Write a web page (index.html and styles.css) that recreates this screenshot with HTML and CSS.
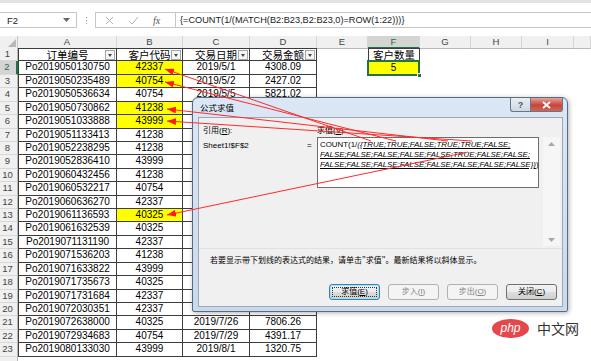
FILE: index.html
```html
<!DOCTYPE html>
<html lang="zh-CN">
<head>
<meta charset="utf-8">
<title>公式求值</title>
<link rel="stylesheet" href="styles.css">
</head>
<body>
<div class="app">
  <div class="topbar">
    <div class="namebox"><span class="nb-text">F2</span><svg class="nb-dd" width="7" height="4" viewBox="0 0 7 4"><path d="M0 0H7L3.5 4Z" fill="#666"/></svg></div>
    <div class="dots"><i></i><i></i><i></i></div>
    <div class="fxbox">
      <svg class="ico" width="9" height="9" viewBox="0 0 9 9"><path d="M1 1L8 8M8 1L1 8" stroke="#b4b4b4" stroke-width="1" fill="none"/></svg>
      <svg class="ico" width="11" height="9" viewBox="0 0 11 9"><path d="M1 5L4 8L10 1" stroke="#b4b4b4" stroke-width="1" fill="none"/></svg>
      <span class="fx">fx</span>
    </div>
    <div class="formula">{=COUNT(1/(MATCH(B2:B23,B2:B23,0)=ROW(1:22)))}</div>
  </div>

  <div class="sheet">
    <div class="row hdr">
      <div class="corner"><svg width="8" height="8" viewBox="0 0 8 8"><path d="M8 0V8H0Z" fill="#b8b8b8"/></svg></div>
      <div class="ch">A</div><div class="ch">B</div><div class="ch">C</div><div class="ch">D</div><div class="ch">E</div><div class="ch selc">F</div><div class="ch">G</div><div class="ch">H</div><div class="ch">I</div><div class="ch"></div>
    </div>
    <div class="row r1">
      <div class="rh">1</div>
      <div class="c a th">订单编号<span class="flt"></span></div>
      <div class="c th">客户代码<span class="flt"></span></div>
      <div class="c th">交易日期<span class="flt"></span></div>
      <div class="c th">交易金额<span class="flt"></span></div>
      <div class="fcell th">客户数量</div>
    </div>
    <div class="row">
      <div class="rh selr">2</div>
      <div class="c a">Po2019050130750</div><div class="c y">42337</div><div class="c">2019/5/1</div><div class="c">4308.09</div>
      <div class="fsel">5<span class="handle"></span></div>
    </div>
    <div class="row"><div class="rh">3</div><div class="c a">Po2019050235489</div><div class="c y">40754</div><div class="c">2019/5/2</div><div class="c">2427.02</div></div>
    <div class="row"><div class="rh">4</div><div class="c a">Po2019050536634</div><div class="c">40754</div><div class="c">2019/5/5</div><div class="c">5821.02</div></div>
    <div class="row"><div class="rh">5</div><div class="c a">Po2019050730862</div><div class="c y">41238</div><div class="c"></div><div class="c"></div></div>
    <div class="row"><div class="rh">6</div><div class="c a">Po2019051033888</div><div class="c y">43999</div><div class="c"></div><div class="c"></div></div>
    <div class="row"><div class="rh">7</div><div class="c a">Po2019051133413</div><div class="c">41238</div><div class="c"></div><div class="c"></div></div>
    <div class="row"><div class="rh">8</div><div class="c a">Po2019052238295</div><div class="c">41238</div><div class="c"></div><div class="c"></div></div>
    <div class="row"><div class="rh">9</div><div class="c a">Po2019052836410</div><div class="c">43999</div><div class="c"></div><div class="c"></div></div>
    <div class="row"><div class="rh">10</div><div class="c a">Po2019060432456</div><div class="c">41238</div><div class="c"></div><div class="c"></div></div>
    <div class="row"><div class="rh">11</div><div class="c a">Po2019060532217</div><div class="c">40754</div><div class="c"></div><div class="c"></div></div>
    <div class="row"><div class="rh">12</div><div class="c a">Po2019060636270</div><div class="c">42337</div><div class="c"></div><div class="c"></div></div>
    <div class="row"><div class="rh">13</div><div class="c a">Po2019061136593</div><div class="c y">40325</div><div class="c"></div><div class="c"></div></div>
    <div class="row"><div class="rh">14</div><div class="c a">Po2019061632539</div><div class="c">40325</div><div class="c"></div><div class="c"></div></div>
    <div class="row"><div class="rh">15</div><div class="c a">Po2019071131190</div><div class="c">42337</div><div class="c"></div><div class="c"></div></div>
    <div class="row"><div class="rh">16</div><div class="c a">Po2019071536203</div><div class="c">41238</div><div class="c"></div><div class="c"></div></div>
    <div class="row"><div class="rh">17</div><div class="c a">Po2019071633822</div><div class="c">43999</div><div class="c"></div><div class="c"></div></div>
    <div class="row"><div class="rh">18</div><div class="c a">Po2019071735673</div><div class="c">40325</div><div class="c"></div><div class="c"></div></div>
    <div class="row"><div class="rh">19</div><div class="c a">Po2019071731684</div><div class="c">42337</div><div class="c"></div><div class="c"></div></div>
    <div class="row"><div class="rh">20</div><div class="c a">Po2019072030351</div><div class="c">42337</div><div class="c">2019/7/20</div><div class="c">4328.82</div></div>
    <div class="row"><div class="rh">21</div><div class="c a">Po2019072638000</div><div class="c">40325</div><div class="c">2019/7/26</div><div class="c">7806.26</div></div>
    <div class="row"><div class="rh">22</div><div class="c a">Po2019072934683</div><div class="c">40754</div><div class="c">2019/7/29</div><div class="c">4391.17</div></div>
    <div class="row"><div class="rh">23</div><div class="c a">Po2019080133030</div><div class="c">43999</div><div class="c">2019/8/1</div><div class="c">1320.75</div></div>
    <div class="row"><div class="rh"></div></div>
  </div>

  <div class="dlg">
    <div class="tb">
      <span class="ttl">公式求值</span>
      <span class="tbtn help">?</span>
      <span class="tbtn close"><svg width="9" height="8" viewBox="0 0 9 8"><path d="M1 1L8 7M8 1L1 7" stroke="#fff" stroke-width="1.8" fill="none"/></svg></span>
    </div>
    <div class="client">
      <div class="labels"><span class="lref">引用(<u>R</u>):</span><span>求值(<u>V</u>):</span></div>
      <div class="mid">
        <div class="ref">Sheet1!$F$2</div>
        <div class="eq">=</div>
        <div class="box">COUNT(1/<span class="ul">({TRUE;TRUE;FALSE;TRUE;TRUE;FALSE;<br>FALSE;FALSE;FALSE;FALSE;FALSE;TRUE;FALSE;FALSE;<br>FALSE;FALSE;FALSE;FALSE;FALSE;FALSE;FALSE;FALSE})</span>)</div>
        <div class="vscroll">
          <svg width="7" height="4" viewBox="0 0 7 4"><path d="M0 4H7L3.5 0Z" fill="#a8a8a8"/></svg>
          <svg width="7" height="4" viewBox="0 0 7 4"><path d="M0 0H7L3.5 4Z" fill="#a8a8a8"/></svg>
        </div>
      </div>
      <div class="sep"></div>
      <div class="msg">若要显示带下划线的表达式的结果，请单击"求值"。最新结果将以斜体显示。</div>
      <div class="btns">
        <span class="btn def"><span class="focus">求值(<u>E</u>)</span></span>
        <span class="btn dis">步入(<u>I</u>)</span>
        <span class="btn dis">步出(<u>O</u>)</span>
        <span class="btn">关闭(<u>C</u>)</span>
      </div>
    </div>
  </div>

  <svg class="arrows" width="591" height="361" viewBox="0 0 591 361">
    <defs>
      <marker id="ah" viewBox="0 0 9 7" refX="0" refY="3.5" markerWidth="9" markerHeight="7" orient="auto" markerUnits="userSpaceOnUse">
        <path d="M0 3.5L9 0L9 7Z" fill="#ff1a1a"/>
      </marker>
    </defs>
    <g stroke="#ff2a2a" stroke-width="1" fill="none">
      <line x1="165" y1="69" x2="371" y2="141" marker-start="url(#ah)"/>
      <line x1="165" y1="82" x2="396" y2="141" marker-start="url(#ah)"/>
      <line x1="167" y1="109" x2="448" y2="141" marker-start="url(#ah)"/>
      <line x1="167" y1="121" x2="472" y2="141" marker-start="url(#ah)"/>
      <line x1="167" y1="215" x2="468" y2="152" marker-start="url(#ah)"/>
    </g>
  </svg>

  <div class="wm"><span class="php">php</span><span class="cn">中文网</span></div>
</div>
</body>
</html>
```

FILE: styles.css
```css
* { box-sizing: border-box; }
html, body { margin: 0; padding: 0; }
body {
  width: 591px;
  height: 361px;
  overflow: hidden;
  background: #fff;
  font-family: "Liberation Sans", "Noto Sans CJK SC", sans-serif;
  color: #000;
}
.app { position: relative; width: 591px; height: 361px; overflow: hidden; }

/* formula bar */
.topbar {
  height: 36px;
  border-top: 3px solid #e2e2e2;
  background: #fff;
  display: flex;
  align-items: flex-start;
  padding-top: 9px;
}
.namebox {
  width: 77px;
  height: 16px;
  border: 1px solid #c6c6c6;
  border-left: none;
  display: flex;
  align-items: center;
  justify-content: space-between;
  padding: 0 6px 0 7px;
  font-size: 9.5px;
  color: #222;
}
.dots { width: 18px; height: 16px; display: flex; flex-direction: column; align-items: center; justify-content: center; gap: 2px; }
.dots i { display: block; width: 1px; height: 1px; background: #999; }
.fxbox {
  width: 80px;
  height: 16px;
  border: 1px solid #c6c6c6;
  border-right: none;
  display: flex;
  align-items: center;
  padding-left: 9px;
  gap: 14px;
}
.fx { font-family: "Liberation Serif", serif; font-style: italic; font-size: 10px; color: #555; }
.formula {
  flex: 1;
  height: 16px;
  border: 1px solid #c6c6c6;
  border-right: none;
  font-size: 9.2px;
  line-height: 14px;
  padding-left: 4px;
  color: #222;
}

/* sheet */
.sheet { display: flex; flex-direction: column; }
.row {
  display: grid;
  grid-template-columns: 18px 99px 66px 67px 67px 51px 52px 51px 51px 52px 1fr;
  height: 13.43px;
}
.row.hdr { height: 12px; }
.corner {
  background: #f0f0f0;
  border-right: 1px solid #c8c8c8;
  border-bottom: 1px solid #b8b8b8;
  display: flex;
  align-items: flex-end;
  justify-content: flex-end;
  padding: 0 1px 1px 0;
}
.ch {
  background: #f0f0f0;
  border-right: 1px solid #d6d6d6;
  border-bottom: 1px solid #b8b8b8;
  font-size: 9.5px;
  line-height: 11px;
  text-align: center;
  color: #444;
}
.ch.selc { background: #d4d4d4; color: #1e6e3f; border-bottom: 2px solid #217346; }
.rh {
  grid-column: 1;
  background: #f0f0f0;
  border-right: 1px solid #b8b8b8;
  border-bottom: 1px solid #d8d8d8;
  font-size: 9.5px;
  line-height: 12.4px;
  text-align: center;
  padding-right: 2px;
  color: #444;
}
.rh.selr { background: #d4d4d4; color: #1e6e3f; border-right: 2px solid #217346; }
.c {
  position: relative;
  border-right: 1px solid #3c3c3c;
  border-bottom: 1px solid #3c3c3c;
  font-size: 10px;
  line-height: 12.4px;
  text-align: center;
  white-space: nowrap;
  overflow: hidden;
}
.c.a { border-left: 1px solid #3c3c3c; }
.r1 .c { border-top: 1px solid #3c3c3c; line-height: 11.4px; }
.th { font-size: 10.5px; font-family: "Noto Sans CJK SC", sans-serif; }
.c.th { line-height: 11.4px; }
.c.y { background: #ffff00; }
.flt {
  position: absolute;
  right: 1px;
  top: 1px;
  width: 10px;
  height: 10px;
  border: 1px solid #a6a6a6;
  background: #f4f4f4;
}
.flt::after {
  content: "";
  position: absolute;
  left: 2px;
  top: 3px;
  border-left: 2.5px solid transparent;
  border-right: 2.5px solid transparent;
  border-top: 3px solid #444;
}
.fcell {
  grid-column: 7;
  border: 1px solid #3c3c3c;
  text-align: center;
  line-height: 11.4px;
}
.fsel {
  grid-column: 7;
  position: relative;
  background: #ffff00;
  border: 2px solid #217346;
  margin: -1px 0 -1px -1px;
  font-size: 10px;
  line-height: 11px;
  text-align: center;
}
.handle {
  position: absolute;
  right: -4px;
  bottom: -4px;
  width: 5px;
  height: 5px;
  background: #217346;
  border: 1px solid #fff;
}

/* dialog */
.dlg {
  position: absolute;
  left: 192px;
  top: 97px;
  width: 376px;
  height: 215px;
  border: 1px solid #5c6b7e;
  border-radius: 6px 6px 2px 2px;
  background: linear-gradient(#dce7f5, #c9d9ee);
  padding: 0 4px 4px 5px;
  display: flex;
  flex-direction: column;
  box-shadow: 1px 1px 5px rgba(0,0,0,0.3);
  font-family: "Liberation Sans", "Noto Sans CJK SC", sans-serif;
  font-size: 8px;
}
.tb { height: 19px; display: flex; align-items: flex-start; }
.ttl { flex: 1; font-size: 8.5px; line-height: 10px; margin: 5px 0 0 2px; color: #000; }
.tbtn {
  height: 14px;
  display: flex;
  align-items: center;
  justify-content: center;
  border: 1px solid #6a7585;
  border-top: none;
}
.help {
  width: 20px;
  border-radius: 0 0 0 3px;
  background: linear-gradient(#e9eef4, #cfd8e3);
  color: #4a5566;
  font-size: 9px;
  font-weight: bold;
  border-right: none;
}
.close {
  width: 33px;
  border-radius: 0 0 3px 0;
  background: linear-gradient(#e3a59d, #c7443a 55%, #d0665c);
}
.client {
  flex: 1;
  background: #f0f0f0;
  border: 1px solid #9aa8b8;
  padding: 8px 0 6px 4px;
  display: flex;
  flex-direction: column;
}
.labels { height: 10px; line-height: 10px; display: flex; }
.lref { width: 114px; }
.mid { display: flex; height: 109px; margin-top: 1px; }
.ref { width: 104px; padding-top: 4px; line-height: 10px; }
.eq { width: 10px; padding-top: 4px; line-height: 10px; }
.box {
  width: 222px;
  height: 51px;
  background: #fff;
  border: 1px solid #6d6d6d;
  padding: 2px 0 0 2px;
  line-height: 10px;
  font-size: 7.9px;
  white-space: nowrap;
}
.ul { font-style: italic; text-decoration: underline; }
.vscroll {
  width: 17px;
  margin-left: 4px;
  background: #f6f6f6;
  display: flex;
  flex-direction: column;
  justify-content: space-between;
  align-items: center;
  padding: 5px 0 4px;
}
.sep { height: 1px; margin: 2px 0 0 -4px; background: #dbe3ea; }
.msg { margin-top: 6px; height: 10px; line-height: 10px; padding-left: 7px; font-family: "Noto Sans CJK SC", sans-serif; }
.btns { margin-top: 19px; height: 16px; display: flex; justify-content: flex-end; gap: 8px; padding-right: 5px; }
.btn {
  width: 51px;
  height: 16px;
  border: 1px solid #707070;
  border-radius: 3px;
  background: linear-gradient(#f2f2f2 0%, #ebebeb 50%, #dddddd 51%, #cfcfcf 100%);
  display: flex;
  align-items: center;
  justify-content: center;
  line-height: 10px;
  color: #000;
}
.btn.def { border-color: #3c7fb1; box-shadow: inset 0 0 0 1px #9fe2fc; padding: 2px; }
.btn.def .focus { flex: 1; align-self: stretch; display: flex; align-items: center; justify-content: center; border: 1px dotted #333; }
.btn.dis { border-color: #adb2b5; background: #f4f4f4; color: #838383; }

/* arrows */
.arrows { position: absolute; left: 0; top: 0; pointer-events: none; }

/* watermark */
.wm { position: absolute; left: 492px; top: 319px; display: flex; align-items: center; gap: 8px; }
.php {
  width: 37px;
  height: 19px;
  border-radius: 50%;
  background: #e4484c;
  color: #fff;
  font-style: italic;
  font-size: 12px;
  line-height: 18px;
  text-align: center;
  font-family: "Liberation Sans", sans-serif;
}
.cn { font-size: 14px; color: #333; font-family: "Noto Sans CJK SC", sans-serif; line-height: 19px; }
```
